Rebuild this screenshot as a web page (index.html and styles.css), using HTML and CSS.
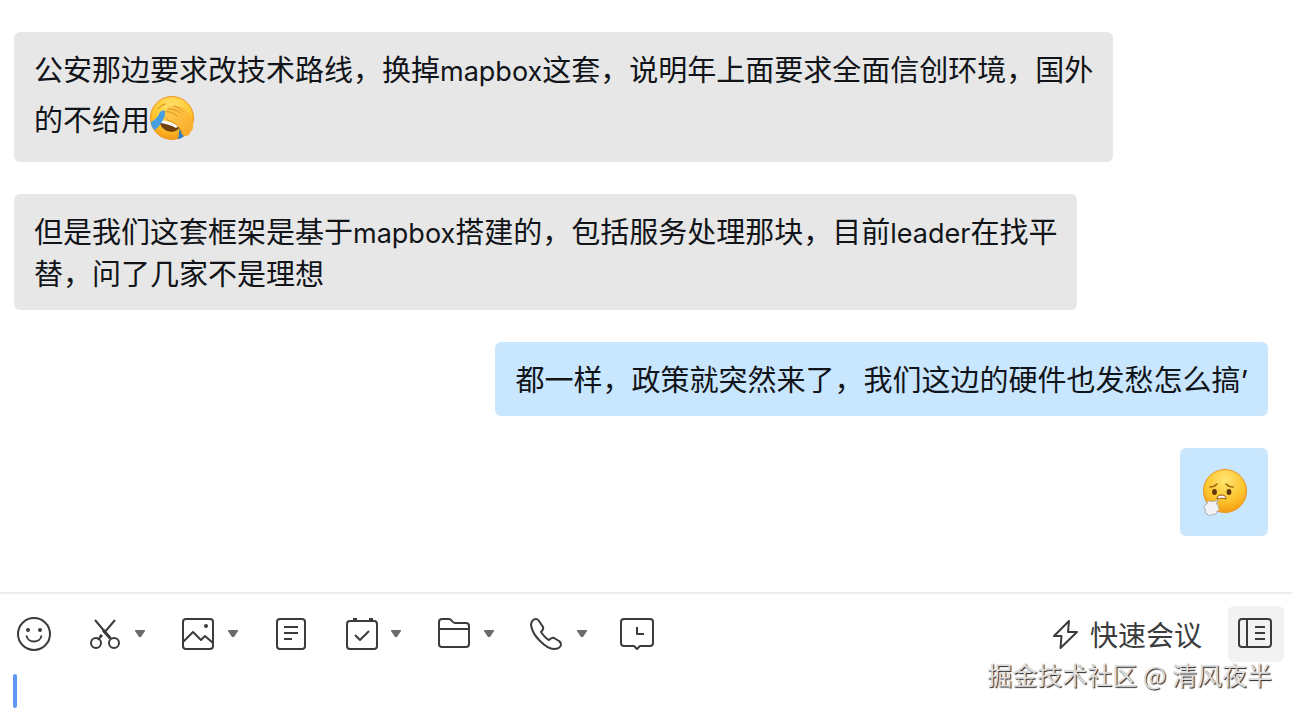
FILE: index.html
```
<!DOCTYPE html>
<html lang="zh-CN">
<head>
    <meta charset="UTF-8">
    <meta name="viewport" content="width=device-width, initial-scale=1.0">
    <title>聊天</title>
    <link rel="stylesheet" href="styles.css">
</head>
<body>
    <div class="chat">
        <main class="messages">
            <div class="message">
                公安那边要求改技术路线，换掉<span class="latin">mapbox</span>这套，说明年上面要求全面信创环境，国外<br>
                的不给用<svg class="emoji" viewBox="0 0 44 44" role="img" aria-label="笑哭捂脸">
                    <defs>
                        <radialGradient id="face" cx="50%" cy="25%" r="80%">
                            <stop offset="0" stop-color="#ffe470"/>
                            <stop offset="0.6" stop-color="#fdc42c"/>
                            <stop offset="1" stop-color="#f2930f"/>
                        </radialGradient>
                        <linearGradient id="hand" x1="0" y1="0" x2="1" y2="1">
                            <stop offset="0" stop-color="#ffce55"/>
                            <stop offset="1" stop-color="#f9a824"/>
                        </linearGradient>
                    </defs>
                    <circle cx="22" cy="22" r="21.5" fill="url(#face)" stroke="#ee951b" stroke-width="1"/>
                    <path d="M10 26c6 0 13 2 20 5-2 4-8 6-13 4-4-2-7-5-7-9z" fill="#70400f"/>
                    <path d="M11 24c6 1 13 3 18 6l-3 2c-5-3-10-4-15-5z" fill="#fff"/>
                    <path d="M10 16c3-2 5-2 6 0-2 7-5 13-11 18-3-2-4-5-4-8 4-2 7-5 9-10z" fill="#459de2"/>
                    <path d="M29 33c3 2 4 4 5 7-2 2-4 3-6 3 1-3 1-7 1-10z" fill="#2c7fc5"/>
                    <path d="M15 16c-1-2 0-3 2-3 0-2 2-3 4-3 2-1 4-1 7 0 7 1 10 5 12 9 2 5 4 9 3 13-1 3-3 4-4 7-3 2-6 1-7-1 0-5-4-8-8-11-3-2-7-2-9-5 0-1 1-1 2-1-1-1-2-2-1-3-1 0-2-1-1-2z" fill="url(#hand)"/>
                    <path d="M15 16c5-1 9 1 12 4M18 13c5 0 9 1 12 4M24 10c3 1 6 2 8 5M15 21c2 4 6 4 9 6 4 3 7 6 8 11" fill="none" stroke="#dd8f20" stroke-width="1" stroke-linecap="round"/>
                    <path d="M8 13c2-3 4-4 7-5" fill="none" stroke="#c98518" stroke-width="1" stroke-linecap="round"/>
                </svg>
            </div>
            <div class="message">
                但是我们这套框架是基于<span class="latin">mapbox</span>搭建的，包括服务处理那块，目前<span class="latin">leader</span>在找平<br>
                替，问了几家不是理想
            </div>
            <div class="message mine">都一样，政策就突然来了，我们这边的硬件也发愁怎么搞’</div>
            <div class="message mine sticker">
                <svg class="emoji" viewBox="0 0 44 44" role="img" aria-label="叹气">
                    <circle cx="23" cy="21" r="21.5" fill="url(#face)" stroke="#ee951b" stroke-width="1"/>
                    <ellipse cx="12.500" cy="22" rx="2.400" ry="2.900" fill="#613409"/>
                    <ellipse cx="27" cy="22" rx="2.400" ry="2.900" fill="#613409"/>
                    <path d="M8 17c3 0 5-1 7-3M24 14c2 2 4 3 7 3" fill="none" stroke="#9b6110" stroke-width="1.500" stroke-linecap="round"/>
                    <path d="M15 29c0-3 2-4 5-4 3 0 4 2 4 4-3-1-5-1-9 0z" fill="#fff" stroke="#90510d" stroke-width="1"/>
                    <path d="M17 30l-3 4c2 0 3 1 2 3 2 2 1 4-1 4 0 3-2 4-4 3-2 2-5 2-5 0-3 0-4-2-2-4-3-2-2-6 1-6 0-3 3-4 5-2 2-2 4 0 7-2z" fill="#f3f3f5" stroke="#aaaab0" stroke-width="1"/>
                </svg>
            </div>
        </main>

        <footer class="composer">
            <div class="toolbar">
                <button class="tool" type="button" aria-label="表情">
                    <svg class="icon" viewBox="0 0 36 36">
                        <circle cx="18" cy="18" r="16"/>
                        <circle class="solid" cx="12" cy="14" r="2"/>
                        <circle class="solid" cx="24" cy="14" r="2"/>
                        <path d="M10.500 19.500c1 8 14 8 15 0"/>
                    </svg>
                </button>
                <button class="tool" type="button" aria-label="截图">
                    <svg class="icon" viewBox="0 0 36 36">
                        <path d="M9 4l16 19M29 4L18 17M15 20l-3 4"/>
                        <path class="thick" d="M17 14l7 8M16 19l-2 2"/>
                        <circle cx="10" cy="27" r="5"/>
                        <circle cx="28" cy="27" r="5"/>
                    </svg>
                    <svg class="arrow" viewBox="0 0 10 8"><path d="M0 0h10v1L6 7H4L0 1z"/></svg>
                </button>
                <button class="tool" type="button" aria-label="图片">
                    <svg class="icon" viewBox="0 0 36 36">
                        <rect x="4" y="3" width="30" height="30" rx="3"/>
                        <path d="M4 26l10-10 8 8 4-4 8 7"/>
                        <circle class="solid" cx="27" cy="10" r="2"/>
                    </svg>
                    <svg class="arrow" viewBox="0 0 10 8"><path d="M0 0h10v1L6 7H4L0 1z"/></svg>
                </button>
                <button class="tool" type="button" aria-label="文档">
                    <svg class="icon" viewBox="0 0 36 36">
                        <rect x="5" y="3" width="28" height="30" rx="3"/>
                        <path d="M12 11h14M12 17h14M12 23h8"/>
                    </svg>
                </button>
                <button class="tool" type="button" aria-label="待办">
                    <svg class="icon" viewBox="0 0 36 36">
                        <rect x="5" y="5" width="30" height="28" rx="3"/>
                        <path d="M13 19l5 5 9-9"/>
                        <path class="thick" d="M11 3.500h4M27 3.500h4"/>
                    </svg>
                    <svg class="arrow" viewBox="0 0 10 8"><path d="M0 0h10v1L6 7H4L0 1z"/></svg>
                </button>
                <button class="tool" type="button" aria-label="文件">
                    <svg class="icon" viewBox="0 0 36 36">
                        <path d="M7 3h7c3 0 3 4 6 4h11q3 0 3 3v18q0 3-3 3H7q-3 0-3-3V6q0-3 3-3zM4 13h30"/>
                    </svg>
                    <svg class="arrow" viewBox="0 0 10 8"><path d="M0 0h10v1L6 7H4L0 1z"/></svg>
                </button>
                <button class="tool" type="button" aria-label="通话">
                    <svg class="icon" viewBox="0 0 36 36">
                        <path d="M8 3c-3 0-5 3-5 6 1 7 4 11 9 16 5 5 9 8 14 8 3 0 6-1 7-4 0-2 0-3-2-4l-5-3c-2-1-3 0-5 2-4-2-6-5-8-8 2-2 3-3 2-5l-4-6c-1-2-2-2-3-2z"/>
                    </svg>
                    <svg class="arrow" viewBox="0 0 10 8"><path d="M0 0h10v1L6 7H4L0 1z"/></svg>
                </button>
                <button class="tool" type="button" aria-label="聊天记录">
                    <svg class="icon" viewBox="0 0 36 36">
                        <path d="M3 3h26q3 0 3 3v21q0 3-3 3H19l-3 3-3-3H3q-3 0-3-3V6q0-3 3-3z"/>
                        <path d="M16 11v7h7"/>
                    </svg>
                </button>

                <button class="meeting" type="button">
                    <svg class="icon" viewBox="0 0 36 36">
                        <path d="M21 5L6 20h7.500L12.500 32 29 16H20z"/>
                    </svg>
                    <span>快速会议</span>
                </button>
                <button class="sidebar" type="button" aria-label="侧边栏">
                    <svg class="icon" viewBox="0 0 36 36">
                        <rect x="1" y="3" width="32" height="28" rx="3"/>
                        <path d="M9 3v28M17 11h10M17 17h10M17 23h10"/>
                    </svg>
                </button>
            </div>
            <div class="editor">
                <span class="caret"></span>
                <textarea aria-label="输入消息"></textarea>
            </div>
        </footer>

        <div class="watermark">掘金技术社区 @ 清风夜半</div>
    </div>
</body>
</html>
```
FILE: styles.css
```
* {
    margin: 0;
    padding: 0;
    box-sizing: border-box;
}

body {
    background-color: #fff;
    color: #111418;
    font-family: Inter, "Noto Sans CJK SC", sans-serif;
    font-size: 28px;
}

.chat {
    position: relative;
    display: flex;
    flex-direction: column;
    min-height: 100vh;
}

.messages {
    flex: 1;
    display: flex;
    flex-direction: column;
    align-items: flex-start;
    gap: 32px;
    padding: 32px 24px 32px 14px;
}

.message {
    padding: 18px 20px 14px;
    border-radius: 6px;
    background-color: #e7e7e7;
    font-size: 29px;
    line-height: 42px;
}

.latin {
    font-size: 27px;
    line-height: 1;
}

.mine {
    align-self: flex-end;
    background-color: #c9e6ff;
}

.emoji {
    width: 44px;
    height: 44px;
    margin: 4px 0 8px;
    vertical-align: -17px;
    overflow: visible;
}

.sticker {
    padding: 22px;
}

.sticker .emoji {
    display: block;
    margin: 0;
}

.composer {
    border-top: 2px solid #ececec;
}

.toolbar {
    display: flex;
    align-items: center;
    gap: 34px;
    padding: 12px 8px 12px 16px;
}

button {
    display: flex;
    align-items: center;
    border: none;
    background: none;
    color: #393b3d;
    font: inherit;
    cursor: pointer;
}

.icon {
    width: 36px;
    height: 36px;
    fill: none;
    stroke: #393b3d;
    stroke-width: 2;
    stroke-linejoin: round;
    overflow: visible;
}

.icon .solid {
    fill: #393b3d;
    stroke: none;
}

.icon .thick {
    stroke-width: 3;
}

.arrow {
    width: 10px;
    height: 8px;
    margin-left: 13px;
    fill: #6b6b6b;
}

.meeting {
    gap: 6px;
    margin-left: auto;
    line-height: 36px;
}

.meeting span {
    padding-top: 4px;
}

.sidebar {
    justify-content: center;
    width: 56px;
    height: 56px;
    margin-left: -8px;
    border-radius: 6px;
    background-color: #f2f2f2;
}

.editor {
    display: flex;
    padding: 0 13px 2px;
}

.caret {
    width: 4px;
    height: 34px;
    border-radius: 2px;
    background-color: #5c98f5;
}

textarea {
    flex: 1;
    height: 34px;
    border: none;
    outline: none;
    resize: none;
    background: none;
    font: inherit;
}

.watermark {
    position: absolute;
    right: 20px;
    bottom: 18px;
    color: #ddd;
    font-family: "Noto Sans CJK SC", sans-serif;
    font-size: 25px;
    line-height: 36px;
    text-shadow: 1px 1px 1px #222;
    pointer-events: none;
}
```
